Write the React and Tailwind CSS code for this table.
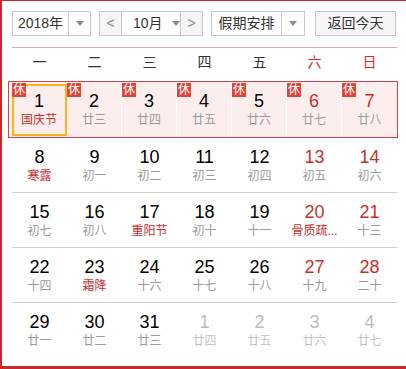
import React from "react";

const WEEK = ["一", "二", "三", "四", "五", "六", "日"];

const LUNAR = {
  1: ["国庆节", true], 2: ["廿三"], 3: ["廿四"], 4: ["廿五"], 5: ["廿六"], 6: ["廿七"], 7: ["廿八"],
  8: ["寒露", true], 9: ["初一"], 10: ["初二"], 11: ["初三"], 12: ["初四"], 13: ["初五"], 14: ["初六"],
  15: ["初七"], 16: ["初八"], 17: ["重阳节", true], 18: ["初十"], 19: ["十一"], 20: ["骨质疏...", true], 21: ["十三"],
  22: ["十四"], 23: ["霜降", true], 24: ["十六"], 25: ["十七"], 26: ["十八"], 27: ["十九"], 28: ["二十"],
  29: ["廿一"], 30: ["廿二"], 31: ["廿三"],
};
const NEXT = ["廿四", "廿五", "廿六", "廿七"];

function buildWeeks() {
  const days = [];
  for (let d = 1; d <= 31; d++) days.push({ day: d, lunar: LUNAR[d][0], fest: !!LUNAR[d][1], cur: true });
  NEXT.forEach((l, i) => days.push({ day: i + 1, lunar: l, fest: false, cur: false }));
  const weeks = [];
  for (let i = 0; i < days.length; i += 7) weeks.push(days.slice(i, i + 7));
  return weeks;
}

function Caret() {
  return (
    <svg width="8" height="5" viewBox="0 0 8 5">
      <path d="M0 0 L8 0 L4 5 Z" fill="#8c8c8c" />
    </svg>
  );
}

function DayCell({ d, col, holiday, selected, last }) {
  const weekend = col >= 5;
  let numColor = "text-black";
  if (!d.cur) numColor = "text-[#bdbdbd]";
  else if (weekend) numColor = "text-[#c5302f]";
  let lunarColor = "text-[#9a9a9a]";
  if (!d.cur) lunarColor = "text-[#c2c2c2]";
  else if (d.fest) lunarColor = "text-[#c5302f]";

  return (
    <div className={`relative w-[55px] flex flex-col items-center pt-[9px] ${holiday && !last ? "border-r border-white" : ""}`}>
      {selected && <div className="absolute left-0 top-[2px] w-[55px] h-[52px] border-2 border-[#f6b51b]" />}
      {holiday && (
        <div className="absolute left-0 top-[1px] w-[14px] h-[14px] bg-[#e0453a] text-white text-[12px] leading-[14px] text-center">
          休
        </div>
      )}
      <div className={`text-[18px] leading-[20px] ${numColor}`}>{d.day}</div>
      <div className={`mt-[2px] text-[12px] leading-[14px] whitespace-nowrap text-center ${lunarColor}`}>{d.lunar}</div>
    </div>
  );
}

export default function App() {
  const weeks = buildWeeks();
  return (
    <div
      className="w-[406px] h-[369px] bg-white border-l-2 border-t border-b-[3px] border-[#c62a2a] pl-[10px] pt-[10px] text-[#333]"
      style={{ fontFamily: '"Liberation Sans", "Noto Sans CJK SC", sans-serif' }}
    >
      {/* toolbar */}
      <div className="flex h-[25px] text-[14px] whitespace-nowrap">
        <div className="flex w-[79px] border border-[#c8c8c8]">
          <div className="w-[55px] flex items-center justify-center">2018年</div>
          <div className="flex-1 border-l border-[#c8c8c8] flex items-center justify-center"><Caret /></div>
        </div>
        <div className="flex w-[104px] ml-[8px] border border-[#c8c8c8]">
          <div className="w-[22px] bg-[#f5f5f5] border-r border-[#c8c8c8] flex items-center justify-center text-[#888]">&lt;</div>
          <div className="flex-1 flex items-center pl-[11px]">
            <span>10月</span>
            <span className="ml-[9px] flex"><Caret /></span>
          </div>
          <div className="w-[22px] bg-[#f5f5f5] border-l border-[#c8c8c8] flex items-center justify-center text-[#888]">&gt;</div>
        </div>
        <div className="flex w-[94px] ml-[8px] border border-[#c8c8c8]">
          <div className="w-[69px] flex items-center justify-center">假期安排</div>
          <div className="flex-1 border-l border-[#c8c8c8] flex items-center justify-center"><Caret /></div>
        </div>
        <div className="w-[81px] ml-[10px] border border-[#c8c8c8] bg-[#f7f7f7] flex items-center justify-center">
          返回今天
        </div>
      </div>

      <div className="w-[385px] mt-[11px] border-t border-[#dcaaa8]" />

      {/* weekday header */}
      <div className="flex w-[385px] h-[33px] text-[14px] leading-[28px]">
        {WEEK.map((w, i) => (
          <div key={w} className={`w-[55px] text-center ${i >= 5 ? "text-[#c5302f]" : "text-[#333]"}`}>{w}</div>
        ))}
      </div>

      {/* holiday week */}
      <div className="flex -ml-[4px] w-[390px] h-[57px] pl-[3px] border border-[#c9474a] bg-[#fdeeee]">
        {weeks[0].map((d, i) => (
          <DayCell key={i} d={d} col={i} holiday selected={i === 0} last={i === 6} />
        ))}
      </div>

      {weeks.slice(1).map((wk, r) => (
        <div key={r} className={`flex w-[385px] h-[55px] ${r < 3 ? "border-b border-[#cfcfcf]" : ""}`}>
          {wk.map((d, i) => (
            <DayCell key={i} d={d} col={i} />
          ))}
        </div>
      ))}
    </div>
  );
}
